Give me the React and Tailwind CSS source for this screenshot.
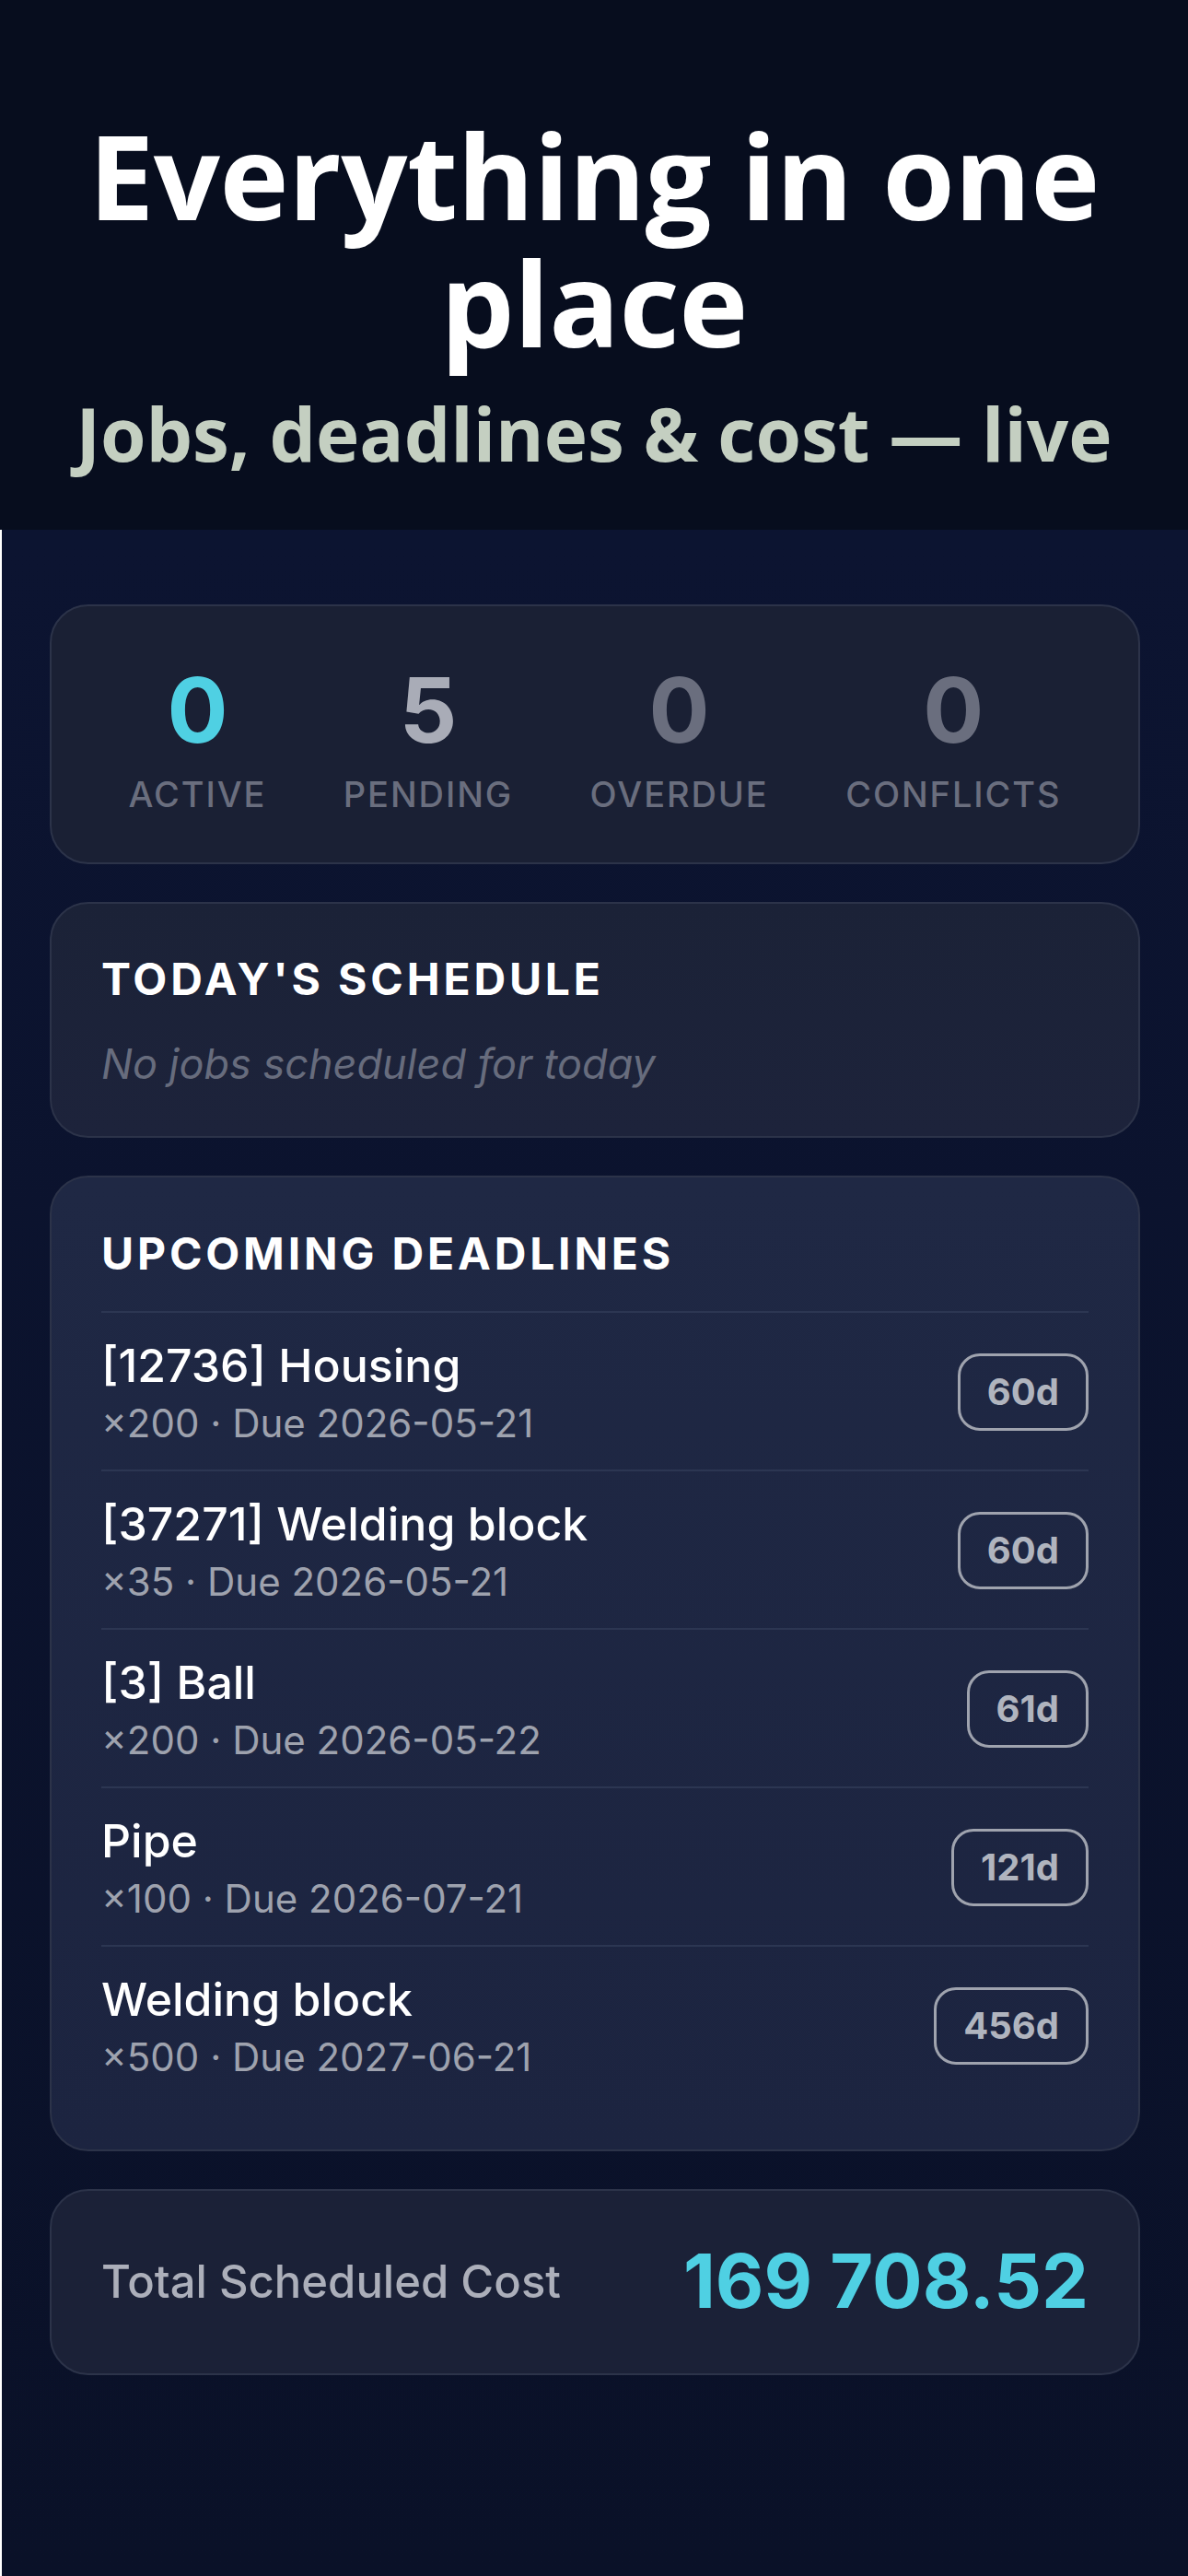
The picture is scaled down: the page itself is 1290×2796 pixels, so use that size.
import React from 'react';

const stats = [
  { value: 0, label: 'ACTIVE', color: 'text-[#4fd0e3]' },
  { value: 5, label: 'PENDING', color: 'text-[#a9acb7]' },
  { value: 0, label: 'OVERDUE', color: 'text-[#6a6e7e]' },
  { value: 0, label: 'CONFLICTS', color: 'text-[#6a6e7e]' },
];

const deadlines = [
  { title: '[12736] Housing', qty: 200, due: '2026-05-21', days: '60d' },
  { title: '[37271] Welding block', qty: 35, due: '2026-05-21', days: '60d' },
  { title: '[3] Ball', qty: 200, due: '2026-05-22', days: '61d' },
  { title: 'Pipe', qty: 100, due: '2026-07-21', days: '121d' },
  { title: 'Welding block', qty: 500, due: '2027-06-21', days: '456d' },
];

export default function App() {
  return (
    <div className="min-h-[2796px] flex flex-col bg-[#0b1229] font-['Inter',sans-serif]">
      {/* Hero */}
      <header className="h-[575px] bg-[#070d1e] flex flex-col items-center pt-[121px] text-center font-['Open_Sans',sans-serif]">
        <h1 className="text-[127px] leading-[138px] font-bold text-white tracking-[-0.5px]">
          Everything in one<br />place
        </h1>
        <p className="mt-[27px] text-[80px] leading-[91px] font-bold text-[#c4cfc1]">
          Jobs, deadlines &amp; cost — live
        </p>
      </header>

      {/* Dashboard */}
      <main className="flex-1 border-l-2 border-white bg-gradient-to-b from-[#0c1431] to-[#0a1128] px-[52px] pt-[81px] pb-[200px] flex flex-col gap-[41px]">
        {/* Stats */}
        <section className="rounded-[42px] border-2 border-[#2c3349] bg-[#1a2034] pt-[53px] pb-[52px] flex justify-evenly">
          {stats.map(s => (
            <div key={s.label} className="flex flex-col items-center">
              <span className={`text-[98px] leading-[120px] font-bold ${s.color}`}>{s.value}</span>
              <span className="mt-[9px] text-[38px] leading-[44px] font-medium tracking-[0.05em] text-[#6a6e7e]">
                {s.label}
              </span>
            </div>
          ))}
        </section>

        {/* Today */}
        <section className="rounded-[42px] border-2 border-[#2c3349] bg-gradient-to-b from-[#1b2237] to-[#1d233b] px-[54px] pt-[54px] pb-[51px]">
          <h2 className="text-[48px] leading-[56px] font-bold tracking-[0.08em] text-white">TODAY'S SCHEDULE</h2>
          <p className="mt-[37px] text-[45px] leading-[54px] italic text-[#676c7d]">No jobs scheduled for today</p>
        </section>

        {/* Deadlines */}
        <section className="rounded-[42px] border-2 border-[#2c3349] bg-gradient-to-b from-[#1f2844] to-[#1c2440] px-[54px] pt-[55px] pb-[50px]">
          <h2 className="text-[48px] leading-[56px] font-bold tracking-[0.08em] text-white">UPCOMING DEADLINES</h2>
          <ul className="mt-[34px]">
            {deadlines.map(d => (
              <li key={d.title + d.due} className="border-t-2 border-[#2c3652] pt-[28px] pb-[26px] flex items-center justify-between">
                <div>
                  <p className="text-[50px] leading-[58px] font-medium text-white">{d.title}</p>
                  <p className="mt-[10px] text-[42px] leading-[48px] text-[#9ea2ae]">×{d.qty} · Due {d.due}</p>
                </div>
                <span className="h-[84px] px-[29px] flex items-center rounded-[24px] border-[3px] border-[#9fa3ae] text-[40px] font-bold text-[#b0b4be]">
                  {d.days}
                </span>
              </li>
            ))}
          </ul>
        </section>

        {/* Cost */}
        <section className="rounded-[42px] border-2 border-[#2c3349] bg-[#1b2137] px-[54px] h-[202px] flex items-center justify-between">
          <span className="text-[49px] font-medium text-[#acafba]">Total Scheduled Cost</span>
          <span className="text-[81px] font-bold text-[#4fd0e3]">169 708.52</span>
        </section>
      </main>
    </div>
  );
}
